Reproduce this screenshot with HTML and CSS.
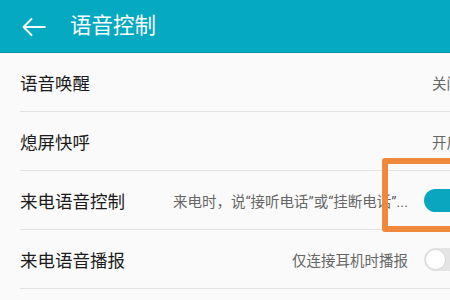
FILE: index.html
```html
<!DOCTYPE html>
<html lang="zh-CN">
<head>
<meta charset="utf-8">
<link rel="stylesheet" href="styles.css">
</head>
<body>
<div class="screen">
  <header class="appbar">
    <svg class="back" width="24" height="18" viewBox="0 0 24 18"><path d="M1.5 9 H23 M9.5 1 L1.5 9 L9.5 17" fill="none" stroke="#fff" stroke-width="1.8" stroke-linecap="round" stroke-linejoin="round"/></svg>
    <h1 class="title">语音控制</h1>
  </header>
  <ul class="list">
    <li class="row">
      <span class="label">语音唤醒</span>
      <span class="value">关闭</span>
    </li>
    <li class="row">
      <span class="label">熄屏快呼</span>
      <span class="value">开启</span>
    </li>
    <li class="row">
      <span class="label">来电语音控制</span>
      <span class="sub">来电时，说“接听电话”或“挂断电话”...</span>
      <span class="switch on"><span class="knob"></span></span>
    </li>
    <li class="row">
      <span class="label">来电语音播报</span>
      <span class="sub">仅连接耳机时播报</span>
      <span class="switch off"><span class="knob"></span></span>
    </li>
  </ul>
  <div class="highlight"></div>
</div>
</body>
</html>
```

FILE: styles.css
```css
* { box-sizing: border-box; margin: 0; padding: 0; }
html, body { width: 450px; height: 300px; overflow: hidden; background: #fafafa; }
body { font-family: Roboto, "Noto Sans CJK SC", sans-serif; }
.screen { position: relative; width: 450px; height: 300px; overflow: hidden; }
.appbar {
  height: 53px;
  background: #05a9c1;
  border-bottom: 1px solid #0893a8;
  display: flex;
  align-items: center;
  padding-left: 22px;
}
.back { display: block; margin-top: 1px; }
.title {
  margin-left: 24px;
  color: #fff;
  font-weight: 400;
  font-size: 21.5px;
  line-height: 1;
}
.list { list-style: none; width: 480px; }
.row {
  height: 59px;
  margin-left: 20px;
  border-bottom: 1px solid #e3e3e3;
  display: flex;
  align-items: center;
  padding-top: 1px;
}
.label { font-size: 17.5px; color: #1c1c1c; white-space: nowrap; }
.value { margin-left: auto; width: 48px; font-size: 14.5px; color: #666; white-space: nowrap; }
.sub { margin-left: auto; margin-right: 16px; font-size: 14.5px; color: #666; white-space: nowrap; }
.switch {
  position: relative;
  width: 48px;
  height: 23px;
  border-radius: 12px;
  flex: none;
  margin-right: 8px;
}
.switch.on { background: #0aa6bf; }
.switch.off { background: #e4e4e4; }
.knob {
  position: absolute;
  top: 1px;
  width: 21px;
  height: 21px;
  border-radius: 50%;
  background: #fff;
}
.on .knob { right: 1px; }
.off .knob { left: 1px; border: 1px solid #d8d8d8; }
.highlight {
  position: absolute;
  left: 382px;
  top: 158px;
  width: 100px;
  height: 74px;
  border: 6px solid #ef8a3c;
  border-radius: 3px;
}
```
